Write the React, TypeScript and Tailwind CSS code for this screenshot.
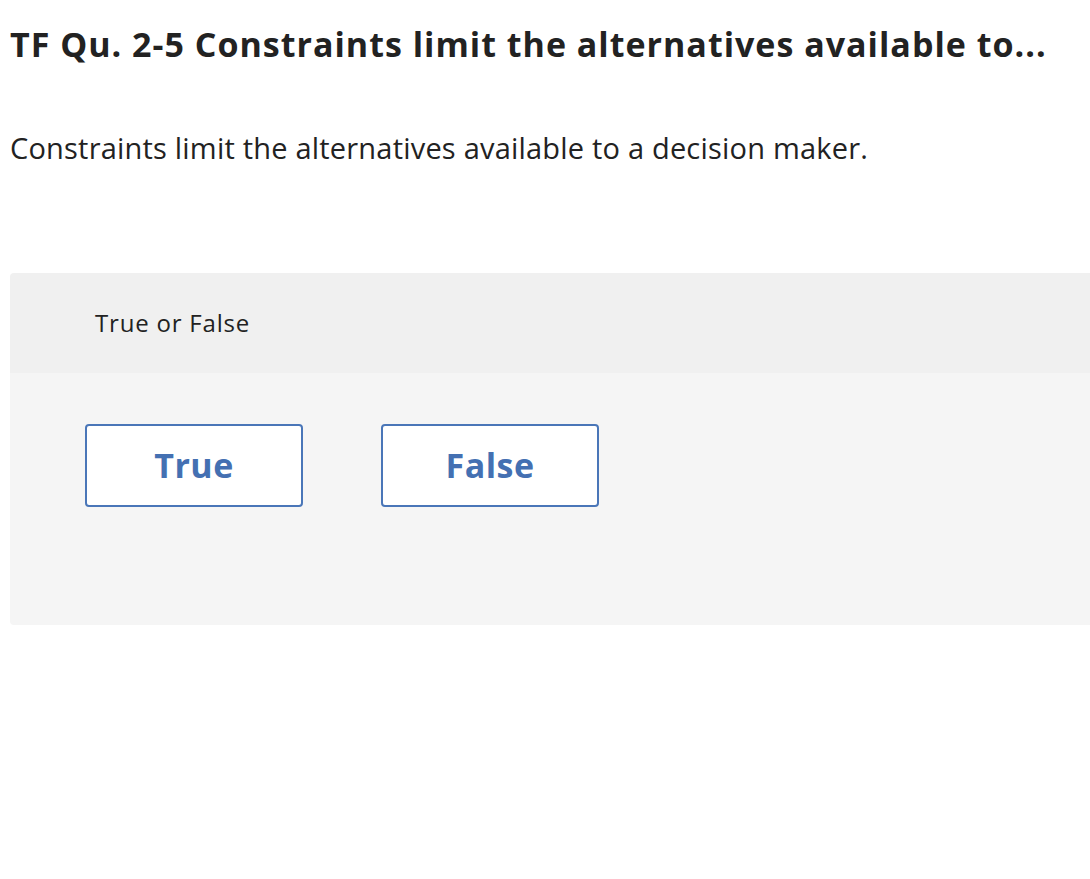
export default function App() {
  const font = { fontFamily: '"Open Sans", "Liberation Sans", sans-serif' };
  return (
    <div className="min-h-[879px] bg-white text-[#222]" style={font}>
      <div className="pl-[10px] pt-[20px]">
        <h1 className="text-[34px] font-bold leading-[48px] tracking-[1px]">
          TF Qu. 2-5 Constraints limit the alternatives available to...
        </h1>
        <p className="mt-[62px] text-[29px] leading-[36px] tracking-[0.2px]">
          Constraints limit the alternatives available to a decision maker.
        </p>
      </div>
      <div className="ml-[10px] mt-[107px] overflow-hidden rounded-l-[4px]">
        <div className="flex h-[100px] items-center bg-[#f0f0f0] pl-[85px]">
          <span className="text-[24px] tracking-[0.8px]">True or False</span>
        </div>
        <div className="flex h-[252px] items-start gap-[78px] bg-[#f5f5f5] pl-[75px] pt-[51px]">
          <button className="h-[83px] w-[218px] rounded-[4px] border-2 border-[#4a76b8] bg-white text-[34px] font-bold tracking-[0.5px] text-[#4470b2]">
            True
          </button>
          <button className="h-[83px] w-[218px] rounded-[4px] border-2 border-[#4a76b8] bg-white text-[34px] font-bold tracking-[0.5px] text-[#4470b2]">
            False
          </button>
        </div>
      </div>
    </div>
  );
}
